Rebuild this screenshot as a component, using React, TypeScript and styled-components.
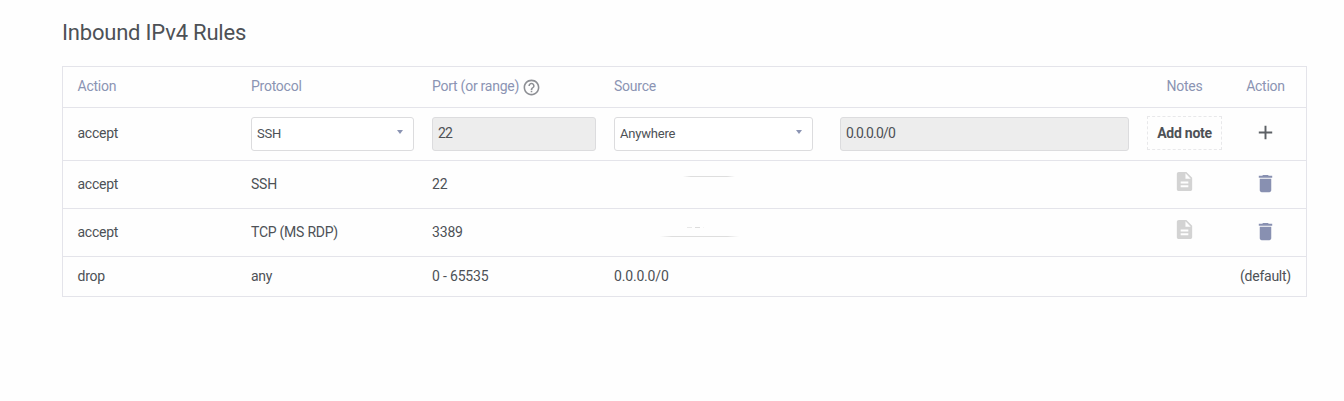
import React from 'react';
import styled, { createGlobalStyle } from 'styled-components';
import { MdAdd, MdDelete, MdDescription, MdHelpOutline } from 'react-icons/md';

const GlobalStyle = createGlobalStyle`
  * { box-sizing: border-box; }
  body {
    margin: 0;
    background: #fefefe;
    color: #4d5156;
    font: 14px/20px Roboto, "Liberation Sans", sans-serif;
    letter-spacing: -0.25px;
  }
  svg { display: block; flex: none; }
`;

const Page = styled.main`
  padding: 18px 37px 0 62px;
`;

const Title = styled.h1`
  margin: 0 0 18px;
  font-size: 22px;
  line-height: 30px;
  font-weight: 400;
  letter-spacing: -0.2px;
`;

const Table = styled.section`
  border: 1px solid #e4e4ea;
  border-bottom: 0;
`;

const Row = styled.div<{ $height: number }>`
  display: grid;
  grid-template-columns: 155.5px 163px 164px 515px 75px 51px;
  column-gap: 18px;
  align-items: center;
  height: ${(p) => p.$height}px;
  padding: 0 15px 0 14.5px;
  border-bottom: 1px solid #e4e4ea;
`;

const HeaderRow = styled(Row)`
  color: #8b94b3;
`;

const Cell = styled.div<{ $center?: boolean }>`
  display: flex;
  align-items: center;
  justify-content: ${(p) => (p.$center ? 'center' : 'flex-start')};
  padding-bottom: 2px;
  white-space: nowrap;
`;

const NumberCell = styled(Cell)`
  letter-spacing: -0.18px;
`;

const Help = styled.span`
  color: #8d8f94;
  margin: 2px 0 -1px 2.5px;
  height: 19px;
`;

const Field = styled.div<{ $width: number; $disabled?: boolean }>`
  display: flex;
  align-items: center;
  justify-content: space-between;
  width: ${(p) => p.$width}px;
  height: 34px;
  padding: 0 10px ${(p) => (p.$disabled ? 2 : 1)}px 5px;
  border: 1px solid #dcdcde;
  border-radius: 3px;
  background: ${(p) => (p.$disabled ? '#ededed' : '#fff')};
  font-size: ${(p) => (p.$disabled ? 14 : 13)}px;
  letter-spacing: ${(p) => (p.$disabled ? -0.8 : -0.2)}px;
`;

const Caret = styled.span`
  border: 3.5px solid transparent;
  border-top: 4px solid #8b94b3;
  border-bottom: 0;
  margin-top: -3px;
`;

const SourceFields = styled.div`
  display: flex;
  gap: 27px;
`;

const NoteButton = styled.button`
  width: 75px;
  height: 34px;
  margin-top: -2px;
  padding: 0;
  border: 1px dashed #e8e8ea;
  background: transparent;
  color: inherit;
  font: 700 14px/20px Roboto, sans-serif;
  letter-spacing: -0.25px;
  white-space: nowrap;
`;

const IconButton = styled.button<{ $color: string; $lift?: number }>`
  display: flex;
  padding: 0;
  border: 0;
  background: transparent;
  color: ${(p) => p.$color};
  margin-bottom: ${(p) => p.$lift ?? 0}px;
`;

const Smudges = styled.svg`
  margin-left: 36px;
`;

const FadeStops = () => (
  <>
    <stop offset="0" stopColor="#dedede" stopOpacity="0" />
    <stop offset=".15" stopColor="#dedede" />
    <stop offset=".85" stopColor="#dedede" />
    <stop offset="1" stopColor="#dedede" stopOpacity="0" />
  </>
);

const FirstSource = () => (
  <Smudges width="100" height="30" aria-hidden>
    <defs><linearGradient id="fadeA"><FadeStops /></linearGradient></defs>
    <rect x="33" y="7" width="52" height="1" fill="url(#fadeA)" />
  </Smudges>
);

const SecondSource = () => (
  <Smudges width="100" height="30" aria-hidden>
    <defs><linearGradient id="fadeB"><FadeStops /></linearGradient></defs>
    <rect x="10" y="19" width="79" height="1" fill="url(#fadeB)" />
    <path d="M37 10.5h5" stroke="#e8e8e8" />
    <path d="M45 10.5h5" stroke="#dcdcdc" />
    <path d="M53 10.5h1" stroke="#f4f4f4" />
  </Smudges>
);

const rules = [
  { protocol: 'SSH', port: '22', source: <FirstSource /> },
  { protocol: 'TCP (MS RDP)', port: '3389', source: <SecondSource /> },
];

export default function App() {
  return (
    <>
      <GlobalStyle />
      <Page>
        <Title>Inbound IPv4 Rules</Title>
        <Table>
          <HeaderRow $height={41}>
            <Cell>Action</Cell>
            <Cell>Protocol</Cell>
            <Cell>Port (or range)<Help><MdHelpOutline size={19} /></Help></Cell>
            <Cell>Source</Cell>
            <Cell $center>Notes</Cell>
            <Cell $center>Action</Cell>
          </HeaderRow>
          <Row $height={53}>
            <Cell>accept</Cell>
            <Field $width={163}>SSH<Caret /></Field>
            <Field $width={164} $disabled>22</Field>
            <SourceFields>
              <Field $width={199}>Anywhere<Caret /></Field>
              <Field $width={289} $disabled>0.0.0.0/0</Field>
            </SourceFields>
            <NoteButton>Add note</NoteButton>
            <Cell $center>
              <IconButton $color="#5c6065" $lift={2} aria-label="Add rule"><MdAdd size={23} /></IconButton>
            </Cell>
          </Row>
          {rules.map((rule) => (
            <Row key={rule.port} $height={48}>
              <Cell>accept</Cell>
              <Cell>{rule.protocol}</Cell>
              <NumberCell>{rule.port}</NumberCell>
              <Cell>{rule.source}</Cell>
              <Cell $center>
                <IconButton $color="#d3d3d3" $lift={4} aria-label="Note"><MdDescription size={23} /></IconButton>
              </Cell>
              <Cell $center>
                <IconButton $color="#8890b1" aria-label="Delete rule"><MdDelete size={23} /></IconButton>
              </Cell>
            </Row>
          ))}
          <Row $height={40}>
            <Cell>drop</Cell>
            <Cell>any</Cell>
            <NumberCell>0 - 65535</NumberCell>
            <NumberCell>0.0.0.0/0</NumberCell>
            <Cell />
            <Cell $center>(default)</Cell>
          </Row>
        </Table>
      </Page>
    </>
  );
}
